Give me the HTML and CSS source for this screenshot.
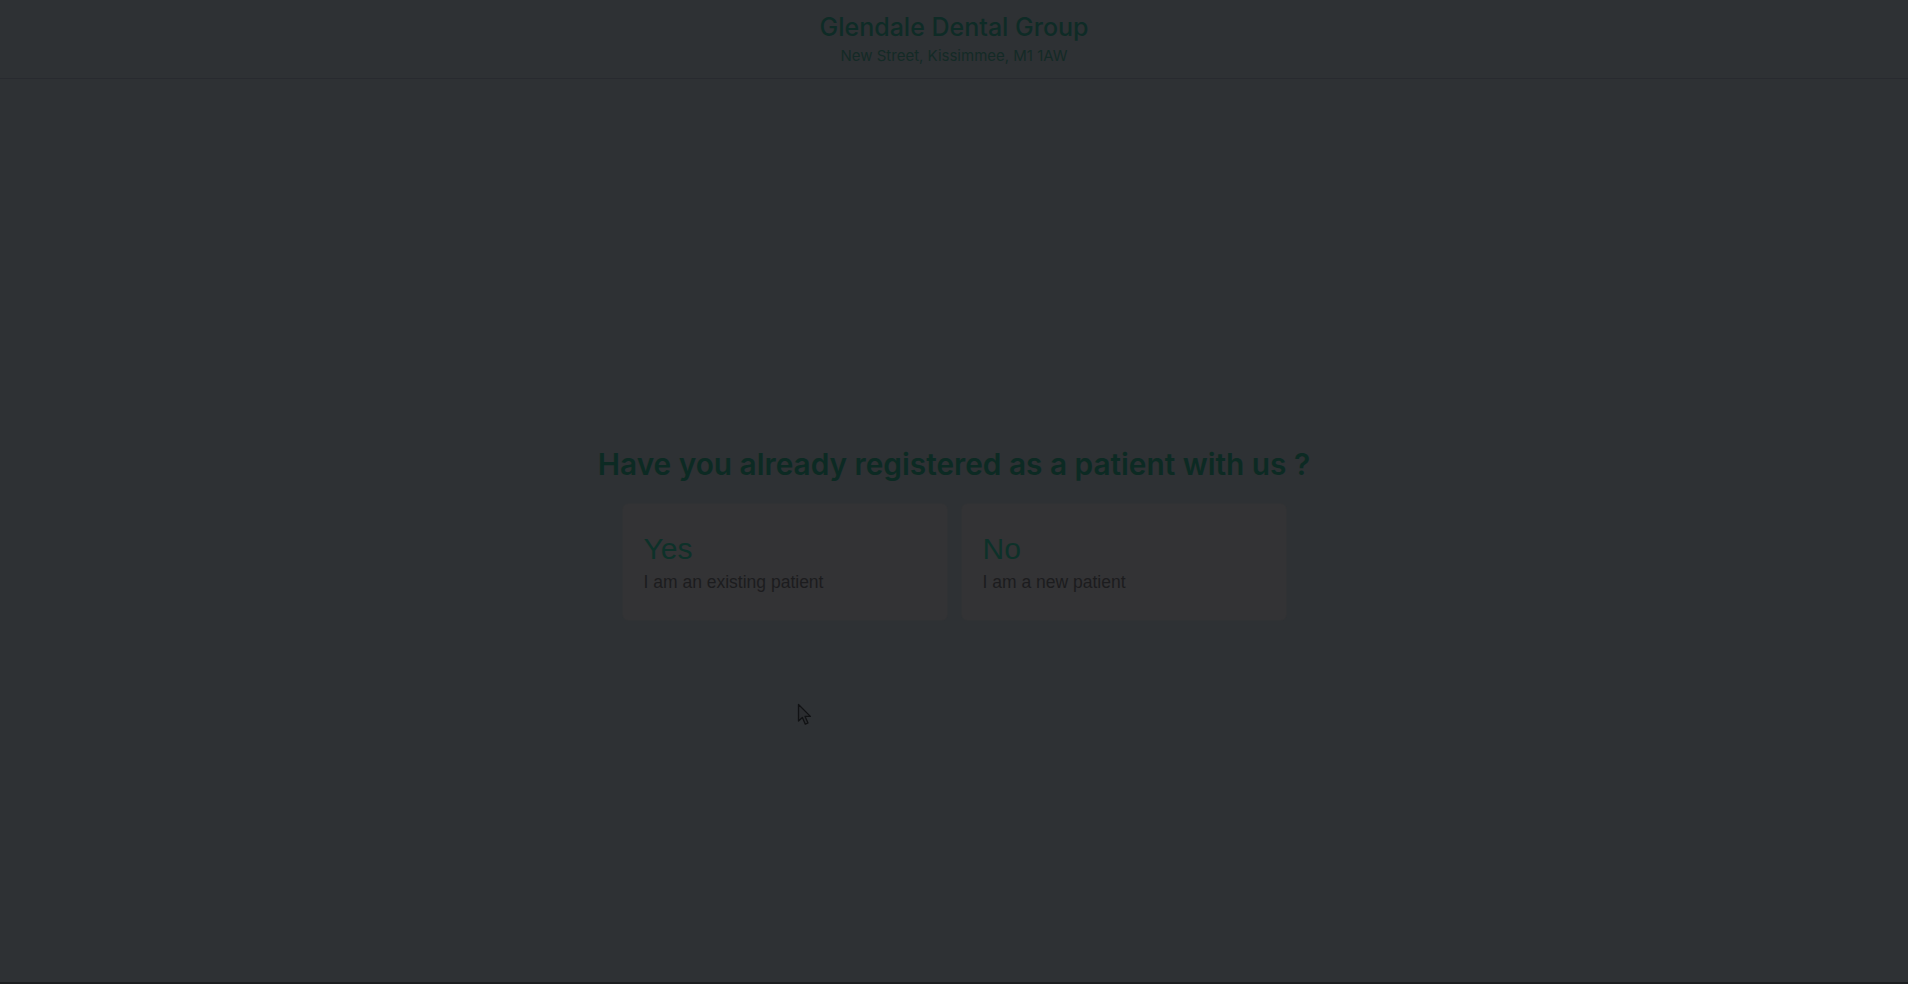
FILE: index.html
```html
<!DOCTYPE html>
<html lang="en">
<head>
    <meta charset="UTF-8">
    <meta name="viewport" content="width=device-width, initial-scale=1.0">
    <title>Glendale Dental Group</title>
    <link rel="stylesheet" href="styles.css">
</head>
<body>
    <header class="site-header">
        <h1 class="practice-name">Glendale Dental Group</h1>
        <p class="practice-address">New Street, Kissimmee, M1 1AW</p>
    </header>

    <main class="main">
        <div class="question">
            <h2 class="question-title">Have you already registered as a patient with us ?</h2>
            <div class="choices">
                <a class="choice" href="#">
                    <span class="choice-title">Yes</span>
                    <span class="choice-text">I am an existing patient</span>
                </a>
                <a class="choice" href="#">
                    <span class="choice-title">No</span>
                    <span class="choice-text">I am a new patient</span>
                </a>
            </div>
        </div>
    </main>

    <!-- mouse pointer -->
    <svg class="cursor" width="16" height="24" viewBox="0 0 16 24">
        <path d="M1.5 1.5 L1.5 18 L5.4 14.4 L8.3 21.2 L11 20 L8.1 13.4 L13.4 13.4 Z" fill="#2a2c2f" stroke="#111214" stroke-width="1.3" stroke-linejoin="round"/>
    </svg>
</body>
</html>
```

FILE: styles.css
```css
body {
    font-family: Inter, "Noto Sans", sans-serif;
    background-color: #2e3134;
    margin: 0;
    padding: 0;
    min-height: 984px;
    border-bottom: 2px solid #1c1e20;
    box-sizing: border-box;
}
.site-header {
    text-align: center;
    padding: 12px 0 12px;
    border-bottom: 1px solid #282a2f;
}
.practice-name {
    margin: 0;
    font-size: 25px;
    font-weight: 500;
    color: #0e2b26;
    line-height: 31px;
}
.practice-address {
    margin: 3px 0 0;
    font-size: 15px;
    color: #142a26;
    line-height: 20px;
}
.main {
    display: flex;
    justify-content: center;
    padding-top: 367px;
}
.question {
    display: flex;
    flex-direction: column;
    align-items: center;
}
.question-title {
    margin: 0;
    font-size: 29.8px;
    font-weight: 600;
    color: #0c2a23;
    line-height: 36px;
}
.choices {
    display: flex;
    gap: 13px;
    margin-top: 21px;
}
.choice {
    display: flex;
    flex-direction: column;
    justify-content: center;
    width: 326px;
    height: 118px;
    box-sizing: border-box;
    padding: 0 21px 0;
    background: #333335;
    border: 1px solid #303234;
    border-radius: 6px;
    text-decoration: none;
    font-family: "Liberation Sans", Arial, sans-serif;
}
.choice-title {
    font-size: 30px;
    color: #0d3129;
    line-height: 34px;
}
.choice-text {
    font-size: 17.5px;
    color: #1c1c1e;
    margin-top: 6px;
}
.cursor {
    position: absolute;
    left: 797px;
    top: 703px;
}
```
